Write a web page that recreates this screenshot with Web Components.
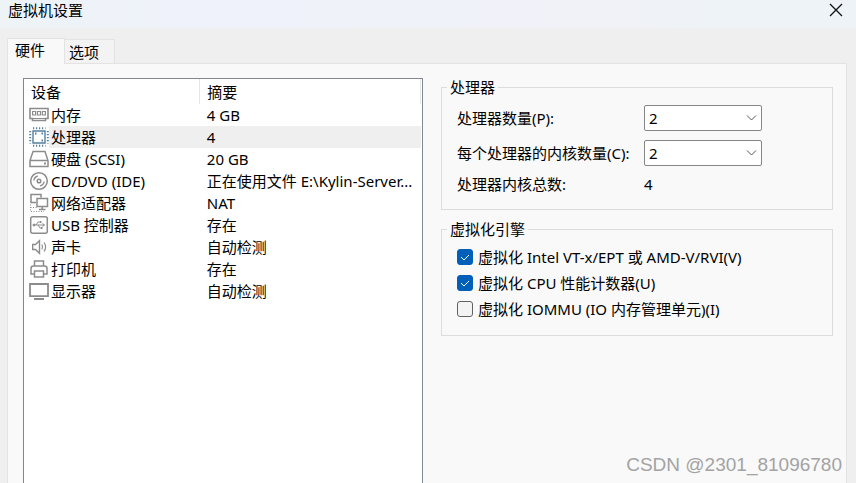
<!DOCTYPE html>
<html lang="zh-CN">
<head>
<meta charset="utf-8">
<title>虚拟机设置</title>
<style>
body {
    margin: 0;
    height: 100vh;
    overflow: hidden;
    background: #efefef;
    color: #000;
    font: 15px/22px "Noto Sans", "Noto Sans CJK SC", sans-serif;
}

.details {
    display: grid;
    align-content: start;
    gap: 10px;
}
</style>
</head>
<body>
<settings-window caption="虚拟机设置">
    <tab-panel tabs="硬件,选项">
        <device-list></device-list>
        <div class="details">
            <group-box legend="处理器">
                <number-select label="处理器数量(P):" value="2"></number-select>
                <number-select label="每个处理器的内核数量(C):" value="2"></number-select>
                <value-row label="处理器内核总数:">4</value-row>
            </group-box>
            <group-box legend="虚拟化引擎" class="dense">
                <check-option checked>虚拟化 Intel VT-x/EPT 或 AMD-V/RVI(V)</check-option>
                <check-option checked>虚拟化 CPU 性能计数器(U)</check-option>
                <check-option>虚拟化 IOMMU (IO 内存管理单元)(I)</check-option>
            </group-box>
        </div>
    </tab-panel>
    <water-mark slot="overlay">CSDN @2301_81096780</water-mark>
</settings-window>

<script>
class SettingsWindow extends HTMLElement {
    constructor() {
        super();

        this.attachShadow({ mode: "open" }).innerHTML = `
<style>
:host {
    display: flex;
    flex-direction: column;
    height: 100vh;
    position: relative;
}

header {
    display: flex;
    justify-content: space-between;
    align-items: flex-start;
    height: 28px;
    padding: 0 13px 0 8px;
    background: linear-gradient(90deg, #edf3f6, #eff2fb 25%, #f1f2f8 70%, #edf3f7 85%);
}

h1 {
    margin: 0;
    font: inherit;
    line-height: 20px;
}

button {
    display: flex;
    padding: 3px 0;
    border: 0;
    background: none;
}
</style>
<header>
    <h1></h1>
    <button aria-label="关闭">
        <svg width="14" height="14" viewBox="0 0 14 14" fill="none" stroke="#111" stroke-width="1.3"><path d="M1 1l12 12M13 1L1 13"/></svg>
    </button>
</header>
<slot></slot>
<slot name="overlay"></slot>
`;
    }

    connectedCallback() {
        this.shadowRoot.querySelector("h1").textContent = this.getAttribute("caption");
    }
}

class TabPanel extends HTMLElement {
    constructor() {
        super();

        this.attachShadow({ mode: "open" }).innerHTML = `
<style>
:host {
    display: flex;
    flex-direction: column;
    flex: 1;
    min-height: 0;
    padding: 10px 9px 0 7px;
}

nav {
    display: flex;
    align-items: flex-end;
}

button {
    height: 24px;
    padding: 0 15px 0 4px;
    border: 1px solid #e3e3e3;
    border-left: 0;
    border-bottom: 0;
    background: #f3f3f3;
    color: inherit;
    font: inherit;
}

button[aria-selected="true"] {
    position: relative;
    height: 26px;
    margin-bottom: -1px;
    padding: 0 19px 3px 7px;
    border-left: 1px solid #e3e3e3;
    background: #f9f9f9;
}

section {
    flex: 1;
    display: grid;
    grid-template-columns: minmax(0, 400fr) minmax(0, 392fr);
    gap: 18px;
    min-height: 0;
    padding: 14px 13px 0 15px;
    border: 1px solid #e3e3e3;
    border-bottom: 0;
    background: #f9f9f9;
}
</style>
<nav role="tablist"></nav>
<section role="tabpanel"><slot></slot></section>
`;
    }

    connectedCallback() {
        this.shadowRoot.querySelector("nav").innerHTML = this.getAttribute("tabs").split(",")
            .map((name, i) => `<button role="tab" aria-selected="${i === 0}">${name}</button>`)
            .join("");
    }
}

const icons = {
    memory: `<path stroke-width="1.6" d="M1 3.500h18v10h-2.500v2h-13v-2H1z"/><path stroke-width="1.2" d="M3.600 6.500h3v3.500h-3zM8.500 6.500h3v3.500h-3zM13.400 6.500h3v3.500h-3z"/><path d="M4 13.500h12"/>`,
    cpu: `<g stroke="#54809f"><path stroke-width="1.400" d="M4 4h12v12H4z"/><path stroke-width="2" stroke-dasharray="1.200 1.800" d="M4 1.200h12.500M4 18.800h12.500M1.200 4v12.500M18.800 4v12.500"/><path stroke-width="2" d="M6 6.500h1.500M12.500 6.500H14M12.500 13.500H14"/></g>`,
    disk: `<path stroke-width="1.500" d="M4 2.500h12l3 9v6H1v-6zM1 11.500h18"/><path stroke-width="2" d="M15 14.500h2"/>`,
    disc: `<circle cx="10" cy="10" r="8.300" stroke-width="1.500"/><circle cx="10" cy="10" r="1.800" stroke-width="1.500"/><path stroke-width="1.300" d="M4.800 9.500a5.500 5.500 0 0 1 4-4.500M15.200 10.500a5.500 5.500 0 0 1-4 4.500"/>`,
    network: `<path stroke-width="1.500" d="M7 9.500H2V1.500h10v3M8 5.500h10.500v8H8zM13.200 13.500v3M10 16.500h6.500"/><path stroke-dasharray="1 1.500" d="M1.500 11.500v7H15M1.500 14.500h6"/>`,
    usb: `<rect x="1.700" y="1.700" width="16.600" height="16.600" rx="2" stroke-width="1.500"/><path d="M4.500 10h11M13.500 8.500l2 1.500-2 1.500M7 10l2-3h2.500M9 10l2 3h2"/><circle cx="5" cy="10" r="1" fill="#8c8c8c"/><path stroke-width="2" d="M11 7h1.500M12 13h1.500"/>`,
    sound: `<path stroke-width="1.400" d="M3.700 7.500H6.500l4-3.800v12.600l-4-3.800H3.700z"/><path stroke-width="1.200" d="M12.800 7.500q1.600 2.500 0 5M15 5.500q3.200 4.500 0 9"/>`,
    printer: `<path stroke-width="1.500" d="M5.500 7V2h9v5M5.500 15H2V9.500q0-2.500 2.500-2.500h11q2.500 0 2.500 2.500V15h-3.500M5.500 12h9v6h-9z"/>`,
    display: `<path stroke-width="1.800" d="M1 3h18v12.200H1zM5 18h10"/>`
};

const devices = [
    ["memory", "内存", "4 GB"],
    ["cpu", "处理器", "4"],
    ["disk", "硬盘 (SCSI)", "20 GB"],
    ["disc", "CD/DVD (IDE)", "正在使用文件 E:\\Kylin-Server..."],
    ["network", "网络适配器", "NAT"],
    ["usb", "USB 控制器", "存在"],
    ["sound", "声卡", "自动检测"],
    ["printer", "打印机", "存在"],
    ["display", "显示器", "自动检测"]
];

class DeviceList extends HTMLElement {
    constructor() {
        super();

        const rows = devices.map(([icon, name, summary], i) => `
    <tr${i === 1 ? ' class="selected"' : ""}>
        <td><span><svg width="20" height="20" viewBox="0 0 20 20" fill="none" stroke="#8c8c8c">${icons[icon]}</svg>${name}</span></td>
        <td>${summary}</td>
    </tr>`).join("");

        this.attachShadow({ mode: "open" }).innerHTML = `
<style>
:host {
    display: block;
    padding: 0 1px 0 5px;
    border: 1px solid #828790;
    border-bottom: 0;
    background: #fff;
}

table {
    width: 100%;
    table-layout: fixed;
    border-collapse: collapse;
}

th, td {
    height: 22px;
    padding: 0 0 0 7px;
    text-align: left;
    font-weight: normal;
    white-space: nowrap;
}

th {
    height: 25px;
    border-right: 1px solid #e5e5e5;
}

th:first-child {
    width: 43%;
    padding-left: 2px;
}

td:first-child {
    padding: 0;
}

span {
    display: flex;
    align-items: center;
    gap: 2px;
}

.selected td {
    background: #efefef;
}

.selected td:first-child {
    background: linear-gradient(90deg, #fff 20px, #efefef 20px);
}
</style>
<table>
    <thead><tr><th>设备</th><th>摘要</th></tr></thead>
    <tbody>${rows}</tbody>
</table>
`;
    }
}

class GroupBox extends HTMLElement {
    constructor() {
        super();

        this.attachShadow({ mode: "open" }).innerHTML = `
<style>
:host {
    display: block;
}

fieldset {
    min-width: 0;
    margin: 0;
    padding: 9px 15px 16px;
    border: 1px solid #dcdcdc;
}

legend {
    margin-left: -10px;
    padding: 0 3px;
    line-height: 18px;
}

div {
    display: grid;
    gap: 9px;
}

:host(.dense) fieldset {
    padding: 8px 15px 15px;
}

:host(.dense) div {
    gap: 4px;
}
</style>
<fieldset>
    <legend></legend>
    <div><slot></slot></div>
</fieldset>
`;
    }

    connectedCallback() {
        this.shadowRoot.querySelector("legend").textContent = this.getAttribute("legend");
    }
}

const rowStyle = `
:host {
    display: grid;
    grid-template-columns: 187px minmax(0, 118px);
    align-items: center;
    line-height: 18px;
    white-space: nowrap;
}
`;

class NumberSelect extends HTMLElement {
    constructor() {
        super();

        this.attachShadow({ mode: "open" }).innerHTML = `
<style>
${rowStyle}
.box {
    display: grid;
    align-items: center;
}

select, svg {
    grid-area: 1 / 1;
}

select {
    appearance: none;
    width: 100%;
    height: 26px;
    padding: 0 4px;
    border: 1px solid #868686;
    border-radius: 2px;
    background: #fff;
    color: inherit;
    font: inherit;
}

svg {
    justify-self: end;
    margin-right: 5px;
    pointer-events: none;
}
</style>
<label for="number"></label>
<div class="box">
    <select id="number"></select>
    <svg width="11" height="6" viewBox="0 0 11 6" fill="none" stroke="#555"><path d="M1 .5l4.500 4.500L10 .5"/></svg>
</div>
`;
    }

    connectedCallback() {
        this.shadowRoot.querySelector("label").textContent = this.getAttribute("label");
        this.shadowRoot.querySelector("select").add(new Option(this.getAttribute("value")));
    }
}

class ValueRow extends HTMLElement {
    constructor() {
        super();

        this.attachShadow({ mode: "open" }).innerHTML = `
<style>${rowStyle}</style>
<span></span>
<div><slot></slot></div>
`;
    }

    connectedCallback() {
        this.shadowRoot.querySelector("span").textContent = this.getAttribute("label");
    }
}

class CheckOption extends HTMLElement {
    constructor() {
        super();

        this.attachShadow({ mode: "open" }).innerHTML = `
<style>
:host {
    display: block;
    white-space: nowrap;
}

label {
    display: flex;
    align-items: center;
    gap: 5px;
}

.box {
    display: grid;
}

input, svg {
    grid-area: 1 / 1;
}

input {
    appearance: none;
    width: 16px;
    height: 16px;
    margin: 0;
    border: 1px solid #626262;
    border-radius: 3px;
    background: #f3f3f3;
}

input:checked {
    border-color: #005fb8;
    background: #005fb8;
}

svg {
    pointer-events: none;
    visibility: hidden;
}

input:checked + svg {
    visibility: visible;
}
</style>
<label>
    <span class="box">
        <input type="checkbox">
        <svg width="16" height="16" viewBox="0 0 16 16" fill="none" stroke="#fff"><path d="M4 8l3 3 5-5"/></svg>
    </span>
    <slot></slot>
</label>
`;
    }

    connectedCallback() {
        this.shadowRoot.querySelector("input").checked = this.hasAttribute("checked");
    }
}

class WaterMark extends HTMLElement {
    constructor() {
        super();

        this.attachShadow({ mode: "open" }).innerHTML = `
<style>
:host {
    position: absolute;
    right: 14px;
    bottom: 7px;
    color: #a3a3a3;
    font: 19px/22px "Liberation Sans", sans-serif;
    pointer-events: none;
}
</style>
<slot></slot>
`;
    }
}

customElements.define("settings-window", SettingsWindow);
customElements.define("tab-panel", TabPanel);
customElements.define("device-list", DeviceList);
customElements.define("group-box", GroupBox);
customElements.define("number-select", NumberSelect);
customElements.define("value-row", ValueRow);
customElements.define("check-option", CheckOption);
customElements.define("water-mark", WaterMark);
</script>
</body>
</html>
